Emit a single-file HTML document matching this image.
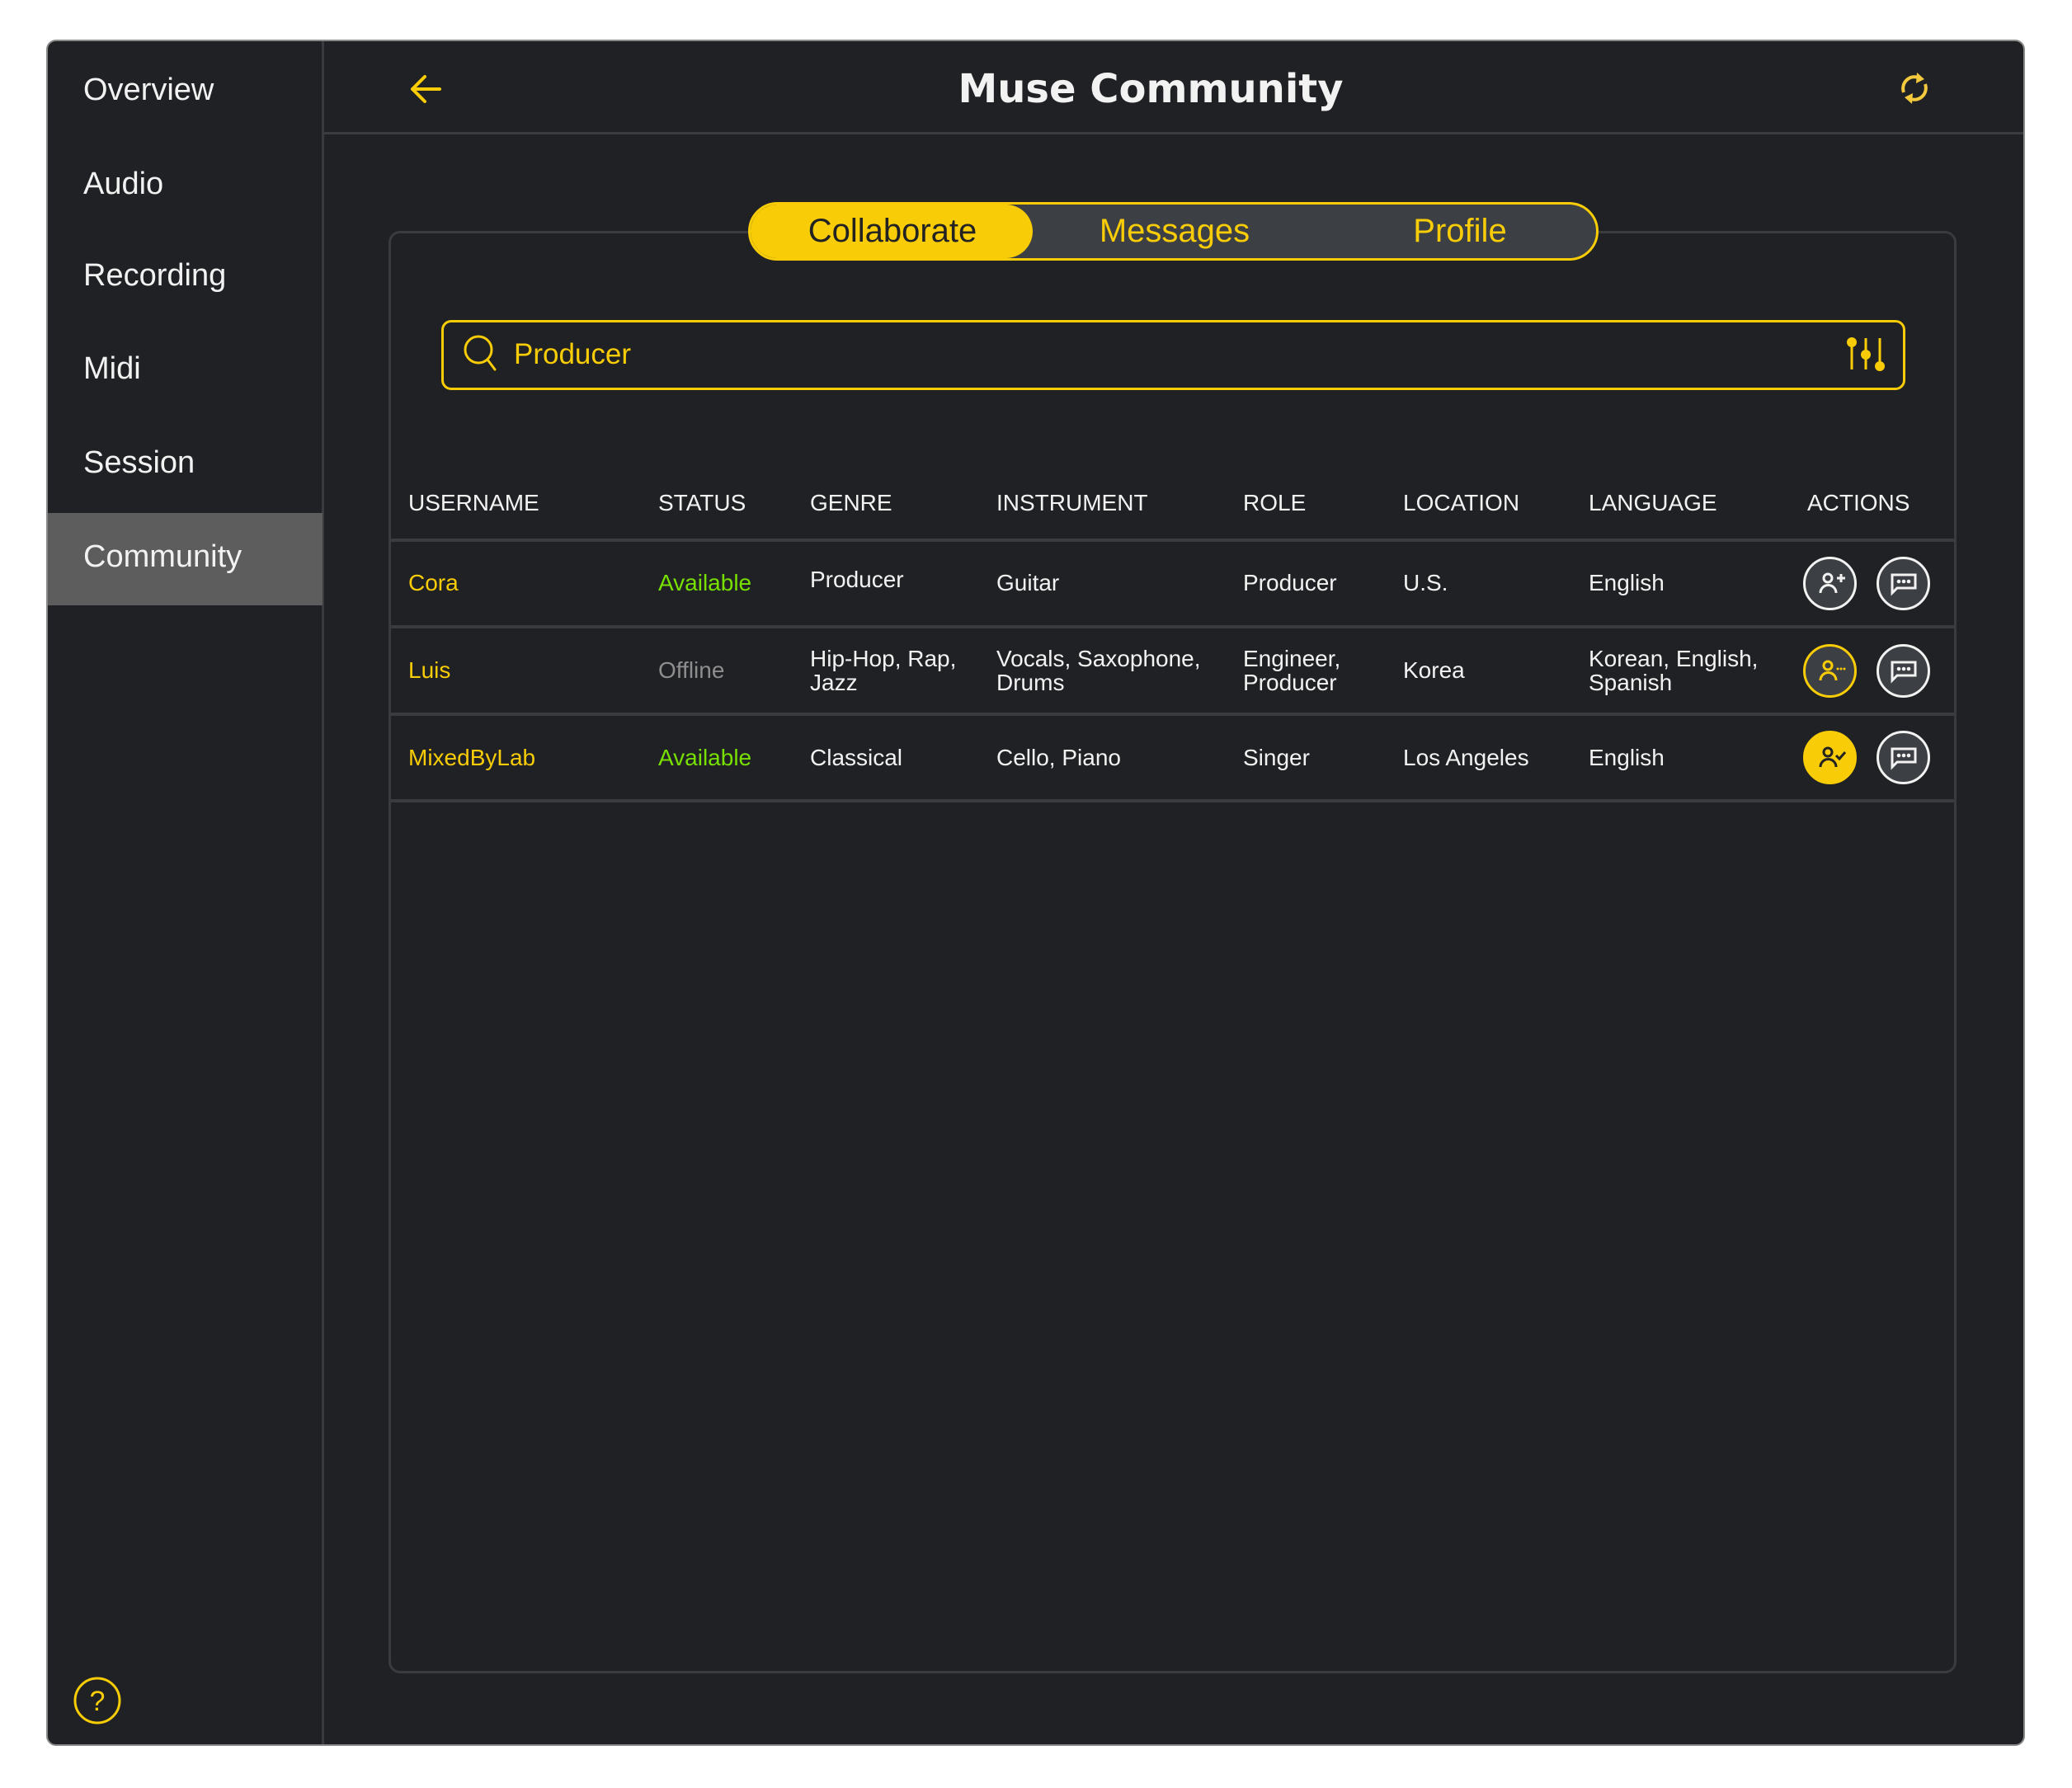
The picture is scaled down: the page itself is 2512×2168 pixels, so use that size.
<!DOCTYPE html>
<html><head><meta charset="utf-8"><style>
*{margin:0;padding:0;box-sizing:border-box}
body{width:2512px;height:2168px;background:#fff;position:relative;overflow:hidden;font-family:"Liberation Sans",Arial,sans-serif}
.frame{position:absolute;left:56px;top:48px;width:2399px;height:2069px;background:#202124;border:2px solid #8a8a8a;border-radius:12px;overflow:hidden}
.side{position:absolute;left:0;top:0;width:335px;height:100%;border-right:3px solid #3a3b3e}
.nav{position:absolute;left:43px;color:#f2f2f2;font-size:38px;line-height:44px}
.active{position:absolute;left:0;top:572px;width:333px;height:112px;background:#5d5d5d}
.hdrline{position:absolute;left:333px;right:0;top:110px;height:3px;background:#3a3b3e}
.title{position:absolute;left:1145px;width:500px;top:78px;text-align:center;color:#f2f2f2;font-family:"DejaVu Sans",sans-serif;font-weight:bold;font-size:48px;line-height:60px;white-space:nowrap}
.card{position:absolute;left:471px;top:280px;width:1901px;height:1749px;border:3px solid #3a3b3e;border-radius:14px}
.tabs{position:absolute;left:907px;top:245px;width:1031px;height:71px;border:3px solid #f8cc06;border-radius:36px;background:#3c3f43;overflow:hidden}
.tab1{position:absolute;left:0;top:0;width:342px;height:100%;background:#f8cc06;border-radius:0 36px 36px 0}
.tt{position:absolute;top:0;line-height:65px;font-size:40px;color:#f8cc06;transform:translateX(-50%);white-space:nowrap}
.search{position:absolute;border:3px solid #f8cc06;border-radius:12px}
.th,.td{position:absolute;font-size:28px;line-height:29px;color:#f2f2f2;white-space:nowrap}
.row{position:absolute;left:471px;width:1901px;height:4px;background:#3a3b3e}
.y{color:#f8cc06}.g{color:#77e000}.o{color:#8e8e8e}
.btn{position:absolute;width:65px;height:65px;border-radius:50%;border:3px solid #f2f2f2;background:#3c3f43}
</style></head><body>
<div class="frame">
 <div class="side">
  <div class="active"></div>
  <div class="nav" style="top:37px">Overview</div>
  <div class="nav" style="top:151px">Audio</div>
  <div class="nav" style="top:262px">Recording</div>
  <div class="nav" style="top:375px">Midi</div>
  <div class="nav" style="top:489px">Session</div>
  <div class="nav" style="top:603px">Community</div>
  <svg style="position:absolute;left:30px;top:1982px" width="60" height="60" viewBox="0 0 60 60"><circle cx="30" cy="30" r="27" fill="none" stroke="#f8cc06" stroke-width="3"/><text x="30" y="42" text-anchor="middle" font-family="Liberation Sans" font-size="34" fill="#f8cc06">?</text></svg>
 </div>
 <div class="hdrline"></div>
</div>
<svg style="position:absolute;left:490px;top:85px" width="50" height="50" viewBox="0 0 50 50"><path d="M43 23H10M25 8L10 23L25 38" fill="none" stroke="#f8cc06" stroke-width="4" stroke-linecap="round" stroke-linejoin="round"/></svg>
<div class="title">Muse Community</div>
<svg style="position:absolute;left:2298px;top:84px" width="46" height="46" viewBox="0 0 46 46"><path d="M10 28A14 14 0 0 1 30 11" fill="none" stroke="#f3c93e" stroke-width="4"/><path d="M26 4L35 12L25 17Z" fill="#f3c93e"/><path d="M36 18A14 14 0 0 1 16 35" fill="none" stroke="#f3c93e" stroke-width="4"/><path d="M20 42L11 34L21 29Z" fill="#f3c93e"/></svg>
<div class="card"></div>
<div class="tabs"><div class="tab1"></div>
 <div class="tt" style="left:172px;color:#222">Collaborate</div>
 <div class="tt" style="left:514px">Messages</div>
 <div class="tt" style="left:860px">Profile</div>
</div>
<div class="search" style="left:535px;top:388px;width:1775px;height:85px"></div>
<svg style="position:absolute;left:560px;top:404px" width="46" height="50" viewBox="0 0 46 50"><circle cx="20" cy="20" r="16" fill="none" stroke="#f8cc06" stroke-width="3"/><path d="M31 32L40 44" stroke="#f8cc06" stroke-width="3" stroke-linecap="round"/></svg>
<div class="td y" style="left:623px;top:412px;font-size:35px;line-height:36px">Producer</div>
<svg style="position:absolute;left:2235px;top:404px" width="55" height="50" viewBox="0 0 55 50"><g stroke="#f8cc06" stroke-width="3"><path d="M10 8V44M27 6V44M44 6V40"/></g><g fill="#f8cc06"><circle cx="10" cy="11" r="6"/><circle cx="27" cy="26" r="6"/><circle cx="44" cy="40" r="6"/></g></svg>
<div class="th" style="left:495px;top:595px">USERNAME</div>
<div class="th" style="left:798px;top:595px">STATUS</div>
<div class="th" style="left:982px;top:595px">GENRE</div>
<div class="th" style="left:1208px;top:595px">INSTRUMENT</div>
<div class="th" style="left:1507px;top:595px">ROLE</div>
<div class="th" style="left:1701px;top:595px">LOCATION</div>
<div class="th" style="left:1926px;top:595px">LANGUAGE</div>
<div class="th" style="left:2191px;top:595px">ACTIONS</div>
<div class="row" style="top:653px"></div>
<div class="row" style="top:758px"></div>
<div class="row" style="top:864px"></div>
<div class="row" style="top:969px"></div>
<div class="td y" style="left:495px;top:692px">Cora</div>
<div class="td g" style="left:798px;top:692px">Available</div>
<div class="td" style="left:982px;top:688px">Producer</div>
<div class="td" style="left:1208px;top:692px">Guitar</div>
<div class="td" style="left:1507px;top:692px">Producer</div>
<div class="td" style="left:1701px;top:692px">U.S.</div>
<div class="td" style="left:1926px;top:692px">English</div>
<div class="td y" style="left:495px;top:798px">Luis</div>
<div class="td o" style="left:798px;top:798px">Offline</div>
<div class="td" style="left:982px;top:784px">Hip-Hop, Rap,<br>Jazz</div>
<div class="td" style="left:1208px;top:784px">Vocals, Saxophone,<br>Drums</div>
<div class="td" style="left:1507px;top:784px">Engineer,<br>Producer</div>
<div class="td" style="left:1701px;top:798px">Korea</div>
<div class="td" style="left:1926px;top:784px">Korean, English,<br>Spanish</div>
<div class="td y" style="left:495px;top:904px">MixedByLab</div>
<div class="td g" style="left:798px;top:904px">Available</div>
<div class="td" style="left:982px;top:904px">Classical</div>
<div class="td" style="left:1208px;top:904px">Cello, Piano</div>
<div class="td" style="left:1507px;top:904px">Singer</div>
<div class="td" style="left:1701px;top:904px">Los Angeles</div>
<div class="td" style="left:1926px;top:904px">English</div>
<div class="btn" style="left:2186px;top:675px"><svg width="59" height="59" viewBox="0 0 59 59"><g fill="none" stroke="#f2f2f2" stroke-width="3"><circle cx="27" cy="23" r="5"/><path d="M18 41A9.5 9.5 0 0 1 37 41"/><path d="M38 23H48M43 18V28"/></g></svg></div>
<div class="btn" style="left:2275px;top:675px"><svg width="59" height="59" viewBox="0 0 59 59"><path d="M16 19H44V35H22L16 41Z" fill="none" stroke="#f2f2f2" stroke-width="3"/><g fill="#f2f2f2"><circle cx="24" cy="27" r="2.3"/><circle cx="30" cy="27" r="2.3"/><circle cx="36" cy="27" r="2.3"/></g></svg></div>
<div class="btn" style="left:2186px;top:781px;border-color:#f8cc06"><svg width="59" height="59" viewBox="0 0 59 59"><g fill="none" stroke="#f8cc06" stroke-width="3"><circle cx="27" cy="23" r="5"/><path d="M18 41A9.5 9.5 0 0 1 37 41"/></g><g fill="#f8cc06"><circle cx="39" cy="27" r="1.5"/><circle cx="43" cy="27" r="1.5"/><circle cx="47" cy="27" r="1.5"/></g></svg></div>
<div class="btn" style="left:2275px;top:781px"><svg width="59" height="59" viewBox="0 0 59 59"><path d="M16 19H44V35H22L16 41Z" fill="none" stroke="#f2f2f2" stroke-width="3"/><g fill="#f2f2f2"><circle cx="24" cy="27" r="2.3"/><circle cx="30" cy="27" r="2.3"/><circle cx="36" cy="27" r="2.3"/></g></svg></div>
<div class="btn" style="left:2186px;top:886px;border-color:#f8cc06;background:#f8cc06"><svg width="59" height="59" viewBox="0 0 59 59"><g fill="none" stroke="#222" stroke-width="3"><circle cx="27" cy="23" r="5"/><path d="M18 41A9.5 9.5 0 0 1 37 41"/><path d="M37 27L41 31L48 23"/></g></svg></div>
<div class="btn" style="left:2275px;top:886px"><svg width="59" height="59" viewBox="0 0 59 59"><path d="M16 19H44V35H22L16 41Z" fill="none" stroke="#f2f2f2" stroke-width="3"/><g fill="#f2f2f2"><circle cx="24" cy="27" r="2.3"/><circle cx="30" cy="27" r="2.3"/><circle cx="36" cy="27" r="2.3"/></g></svg></div>
</body></html>
